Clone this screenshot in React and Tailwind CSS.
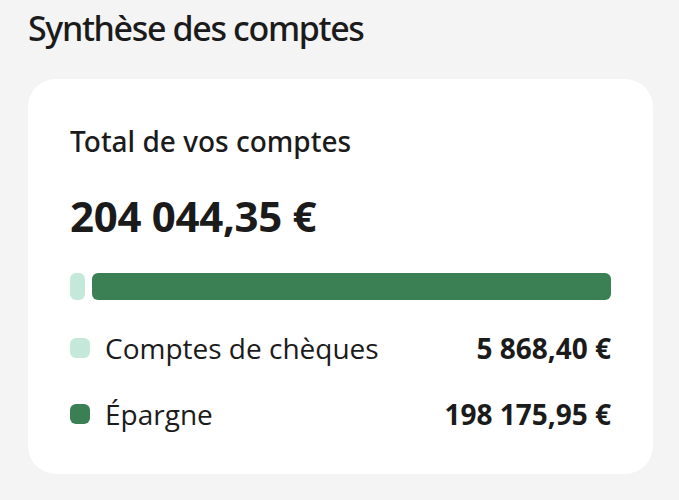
export default function App() {
  return (
    <div className="w-[679px] h-[500px] bg-[#f4f4f4] overflow-hidden text-[#1b1b1b]" style={{ fontFamily: '"Open Sans", sans-serif' }}>
      <h1 className="pl-[28px] pt-[6px] text-[34px] leading-[44px] font-medium tracking-[-1.35px]" style={{ fontFamily: '"Noto Sans", sans-serif' }}>Synthèse des comptes</h1>
      <div className="ml-[28px] mt-[29px] w-[625px] h-[395px] bg-white rounded-[28px] px-[42px] pt-[44px]">
        <div className="text-[28px] leading-[36px] font-medium" style={{ fontFamily: '"Noto Sans", sans-serif' }}>Total de vos comptes</div>
        <div className="mt-[31px] text-[42px] leading-[52px] font-bold tracking-[-0.3px]">204 044,35 €</div>
        <div className="mt-[31px] flex gap-[7px] h-[27px]">
          <div className="w-[15px] rounded-[6px] bg-[#c4e8d9]"></div>
          <div className="flex-1 rounded-[6px] bg-[#3b7f55]"></div>
        </div>
        <div className="mt-[30px] flex items-center justify-between h-[36px]">
          <div className="flex items-center gap-[15px]">
            <div className="w-[20px] h-[20px] rounded-[6px] bg-[#c4e8d9]"></div>
            <span className="text-[28px] leading-[36px]">Comptes de chèques</span>
          </div>
          <span className="text-[28px] leading-[36px] font-bold">5 868,40 €</span>
        </div>
        <div className="mt-[30px] flex items-center justify-between h-[36px]">
          <div className="flex items-center gap-[15px]">
            <div className="w-[20px] h-[20px] rounded-[6px] bg-[#3b7f55]"></div>
            <span className="text-[28px] leading-[36px]">Épargne</span>
          </div>
          <span className="text-[28px] leading-[36px] font-bold">198 175,95 €</span>
        </div>
      </div>
    </div>
  );
}
